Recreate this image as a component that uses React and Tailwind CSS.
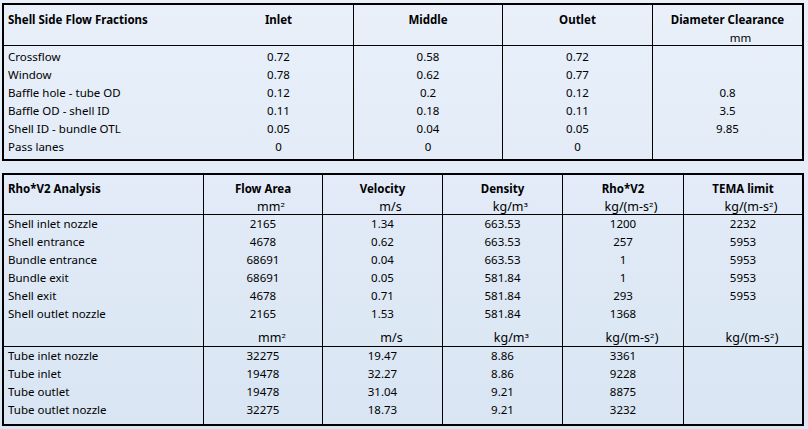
import React from "react";

const font = { fontFamily: '"Noto Sans", "Open Sans", Arial, sans-serif' };

const t1Cols = "grid grid-cols-[200px_150px_149px_150px_149px]";
const t2Cols = "grid grid-cols-[200px_119px_120px_120px_121px_118px]";

const flowRows = [
  ["Crossflow", "0.72", "0.58", "0.72", ""],
  ["Window", "0.78", "0.62", "0.77", ""],
  ["Baffle hole - tube OD", "0.12", "0.2", "0.12", "0.8"],
  ["Baffle OD - shell ID", "0.11", "0.18", "0.11", "3.5"],
  ["Shell ID - bundle OTL", "0.05", "0.04", "0.05", "9.85"],
  ["Pass lanes", "0", "0", "0", ""],
];

const shellRows = [
  ["Shell inlet nozzle", "2165", "1.34", "663.53", "1200", "2232"],
  ["Shell entrance", "4678", "0.62", "663.53", "257", "5953"],
  ["Bundle entrance", "68691", "0.04", "663.53", "1", "5953"],
  ["Bundle exit", "68691", "0.05", "581.84", "1", "5953"],
  ["Shell exit", "4678", "0.71", "581.84", "293", "5953"],
  ["Shell outlet nozzle", "2165", "1.53", "581.84", "1368", ""],
];

const tubeRows = [
  ["Tube inlet nozzle", "32275", "19.47", "8.86", "3361", ""],
  ["Tube inlet", "19478", "32.27", "8.86", "9228", ""],
  ["Tube outlet", "19478", "31.04", "9.21", "8875", ""],
  ["Tube outlet nozzle", "32275", "18.73", "9.21", "3232", ""],
];

const Sup = ({ children }) => (
  <span className="font-['DejaVu_Sans',sans-serif] text-[11.5px]">{children}</span>
);

const units = [
  <>mm<Sup>²</Sup></>,
  <>m/s</>,
  <>kg/m<Sup>³</Sup></>,
  <>kg/(m-s<Sup>²</Sup>)</>,
  <>kg/(m-s<Sup>²</Sup>)</>,
];

function Table1() {
  const vline = ["", "border-r border-black", "border-r border-black", "border-r border-black", ""];
  const heads = ["Shell Side Flow Fractions", "Inlet", "Middle", "Outlet", "Diameter Clearance"];
  return (
    <div className="ml-[2px] mt-[3px] w-[802px] border-2 border-black">
      <div className={`${t1Cols} border-b border-black`}>
        {heads.map((h, i) => (
          <div key={i} className={`${vline[i]} h-[40px] pt-[6px] ${i === 0 ? "pl-[4px] text-left" : "text-center"}`}>
            <div className="font-bold leading-[18px]">{h}</div>
            {i === 4 && <div className="mt-[2px] pl-[26px] leading-[14px]">mm</div>}
          </div>
        ))}
      </div>
      <div className={`${t1Cols}`}>
        {[0, 1, 2, 3, 4].map((c) => (
          <div key={c} className={`${vline[c]} pt-[2px] pb-[3px] ${c === 0 ? "pl-[4px] text-left" : "text-center"}`}>
            {flowRows.map((r, i) => (
              <div key={i} className="h-[18px] leading-[18px] whitespace-nowrap">{r[c] || "\u00a0"}</div>
            ))}
          </div>
        ))}
      </div>
    </div>
  );
}

function Table2() {
  const heads = ["Rho*V2 Analysis", "Flow Area", "Velocity", "Density", "Rho*V2", "TEMA limit"];
  const line = (c) => (c < 5 ? "border-r border-black" : "");
  const align = (c) => (c === 0 ? "pl-[4px] text-left" : "text-center");
  return (
    <div className="ml-[2px] mt-[12px] w-[802px] border-2 border-black">
      <div className={`${t2Cols} border-b border-black`}>
        {heads.map((h, c) => (
          <div key={c} className={`${line(c)} h-[39px] pt-[5px] ${align(c)}`}>
            <div className="font-bold leading-[18px]">{h}</div>
            {c > 0 && <div className="mt-[2px] pl-[16px] text-[12.5px] leading-[14px] whitespace-nowrap">{units[c - 1]}</div>}
          </div>
        ))}
      </div>
      <div className={`${t2Cols} border-b border-black`}>
        {[0, 1, 2, 3, 4, 5].map((c) => (
          <div key={c} className={`${line(c)} ${align(c)}`}>
            {shellRows.map((r, i) => (
              <div key={i} className="h-[18px] leading-[18px] whitespace-nowrap">{r[c] || "\u00a0"}</div>
            ))}
            <div className={`h-[23px] pt-[8px] text-[12.5px] leading-[14px] whitespace-nowrap ${c > 0 ? "pl-[18px]" : ""}`}>
              {c > 0 ? units[c - 1] : "\u00a0"}
            </div>
          </div>
        ))}
      </div>
      <div className={`${t2Cols}`}>
        {[0, 1, 2, 3, 4, 5].map((c) => (
          <div key={c} className={`${line(c)} pb-[5px] ${align(c)}`}>
            {tubeRows.map((r, i) => (
              <div key={i} className="h-[18px] leading-[18px] whitespace-nowrap">{r[c] || "\u00a0"}</div>
            ))}
          </div>
        ))}
      </div>
    </div>
  );
}

export default function App() {
  return (
    <div
      className="w-[808px] h-[429px] overflow-hidden bg-gradient-to-b from-[#e9f0fa] to-[#d9e5f3] text-[11.5px] text-black"
      style={font}
    >
      <Table1 />
      <Table2 />
    </div>
  );
}
